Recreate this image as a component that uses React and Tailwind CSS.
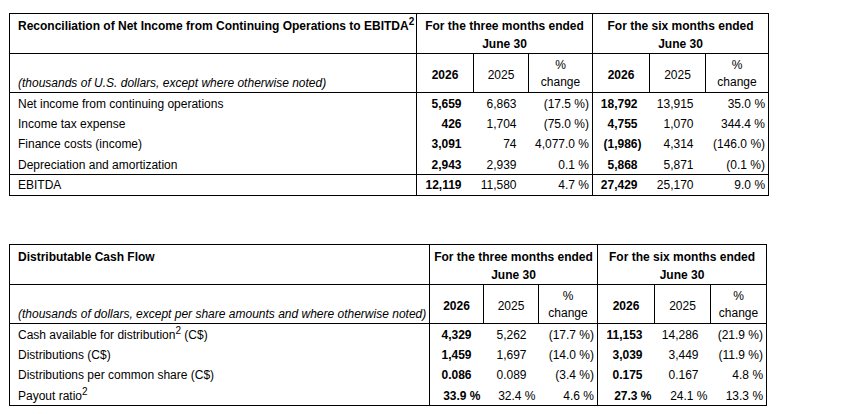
import React from "react";

const t1Rows = [
  ["Net income from continuing operations", "5,659", "6,863", "(17.5 %)", "18,792", "13,915", "35.0 %"],
  ["Income tax expense", "426", "1,704", "(75.0 %)", "4,755", "1,070", "344.4 %"],
  ["Finance costs (income)", "3,091", "74", "4,077.0 %", "(1,986)", "4,314", "(146.0 %)"],
  ["Depreciation and amortization", "2,943", "2,939", "0.1 %", "5,868", "5,871", "(0.1 %)"],
];
const t1Total = ["EBITDA", "12,119", "11,580", "4.7 %", "27,429", "25,170", "9.0 %"];

const t2Rows = [
  [<>Cash available for distribution<sup className="text-[10px]">2</sup> (C$)</>, "4,329", "5,262", "(17.7 %)", "11,153", "14,286", "(21.9 %)"],
  ["Distributions (C$)", "1,459", "1,697", "(14.0 %)", "3,039", "3,449", "(11.9 %)"],
  ["Distributions per common share (C$)", "0.086", "0.089", "(3.4 %)", "0.175", "0.167", "4.8 %"],
  [<>Payout ratio<sup className="text-[10px]">2</sup></>, "33.9 %", "32.4 %", "4.6 %", "27.3 %", "24.1 %", "13.3 %"],
];

function padClass(v) {
  if (v.includes("%")) return "pr-[3px]";
  if (v.endsWith(")")) return "pr-[8px]";
  return "pr-[12px]";
}

function DataRow({ row, bottomLine }) {
  const [label, ...vals] = row;
  const rowB = bottomLine ? "border-b border-black" : "";
  return (
    <tr className="h-[20.5px]">
      <td className={`pl-2 pt-[1px] align-middle border-r border-black whitespace-nowrap ${rowB}`}>{label}</td>
      {vals.map((v, i) => (
        <td
          key={i}
          className={`pt-[1px] text-right align-middle whitespace-nowrap ${padClass(v)} ${
            i === 0 || i === 3 ? "font-bold" : ""
          } ${i === 2 ? "border-r border-black" : ""} ${rowB}`}
        >
          {v}
        </td>
      ))}
    </tr>
  );
}

function FinTable({ title, note, cols, width, rows, total }) {
  return (
    <table
      className="table-fixed border-collapse border border-black text-[12px] leading-[18px] text-black"
      style={{ width }}
    >
      <colgroup>
        {cols.map((w, i) => (
          <col key={i} style={{ width: w }} />
        ))}
      </colgroup>
      <tbody>
        <tr className="h-[39px]">
          <td className="pl-2 pt-[3px] align-top font-bold border-r border-b border-black whitespace-nowrap">
            {title}
          </td>
          <td colSpan={3} className="pt-[3px] align-top text-center font-bold border-r border-b border-black whitespace-nowrap">
            For the three months ended
            <br />
            June 30
          </td>
          <td colSpan={3} className="pt-[3px] align-top text-center font-bold border-b border-black whitespace-nowrap">
            For the six months ended
            <br />
            June 30
          </td>
        </tr>
        <tr className="h-[39px]">
          <td className="pl-2 align-bottom italic border-r border-b border-black whitespace-nowrap">{note}</td>
          <td className="pt-[3px] text-center align-middle font-bold border-r border-b border-black">2026</td>
          <td className="pt-[3px] text-center align-middle border-r border-b border-black">2025</td>
          <td className="text-center align-bottom leading-[17px] pb-[1px] border-r border-b border-black">
            %
            <br />
            change
          </td>
          <td className="pt-[3px] text-center align-middle font-bold border-r border-b border-black">2026</td>
          <td className="pt-[3px] text-center align-middle border-r border-b border-black">2025</td>
          <td className="text-center align-bottom leading-[17px] pb-[1px] border-b border-black">
            %
            <br />
            change
          </td>
        </tr>
        {rows.map((r, i) => (
          <DataRow key={i} row={r} bottomLine={total && i === rows.length - 1} />
        ))}
        {total && (
          <tr className="h-[21px]">
            <td className="pl-2 align-middle border-r border-black">{total[0]}</td>
            {total.slice(1).map((v, i) => (
              <td
                key={i}
                className={`text-right align-middle whitespace-nowrap ${padClass(v)} ${
                  i === 0 || i === 3 ? "font-bold" : ""
                } ${i === 2 ? "border-r border-black" : ""}`}
              >
                {v}
              </td>
            ))}
          </tr>
        )}
      </tbody>
    </table>
  );
}

export default function App() {
  return (
    <div className="w-[863px] h-[414px] bg-white font-['Liberation_Sans',Arial,sans-serif] overflow-hidden">
      <div className="pl-[9px] pt-[13px] flex flex-col gap-[48px]">
        <FinTable
          title={
            <>
              Reconciliation of Net Income from Continuing Operations to EBITDA
              <sup className="text-[10px]">2</sup>
            </>
          }
          note="(thousands of U.S. dollars, except where otherwise noted)"
          cols={[407, 57, 55, 64, 57, 56, 63]}
          width={759}
          rows={t1Rows}
          total={t1Total}
        />
        <FinTable
          title="Distributable Cash Flow"
          note="(thousands of dollars, except per share amounts and where otherwise noted)"
          cols={[420, 54, 55, 59, 57, 56, 56]}
          width={757}
          rows={t2Rows}
        />
      </div>
    </div>
  );
}
